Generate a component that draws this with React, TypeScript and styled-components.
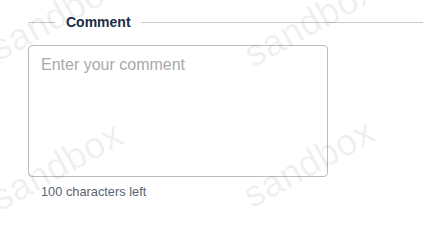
import styled, {createGlobalStyle} from 'styled-components';

const GlobalStyle = createGlobalStyle`
  html, body {
    margin: 0;
    padding: 0;
    background: #ffffff;
    font-family: "Liberation Sans", Arial, sans-serif;
  }
`;

const Page = styled.div`
  position: relative;
  width: 423px;
  height: 214px;
  overflow: hidden;
  padding: 14px 0 0 28px;
  box-sizing: border-box;
`;

const TitleRow = styled.div`
  display: flex;
  align-items: center;
  height: 16px;
`;

const Rule = styled.span<{$grow?: boolean}>`
  height: 1px;
  background: #c9c9c9;
  flex: ${(p) => (p.$grow ? '1 1 auto' : '0 0 27px')};
`;

const Title = styled.span`
  margin: 0 10px 0 11px;
  font-size: 14px;
  line-height: 16px;
  font-weight: 700;
  color: #1b2d45;
`;

const CommentBox = styled.textarea`
  display: block;
  margin-top: 15px;
  width: 300px;
  height: 132px;
  box-sizing: border-box;
  padding: 10px 12px;
  border: 1px solid #bdbdbd;
  border-radius: 4px;
  resize: none;
  outline: none;
  font-family: "Liberation Sans", Arial, sans-serif;
  font-size: 16px;
  color: #333333;
  background: #ffffff;

  &::placeholder {
    color: #a9a9a9;
  }
`;

const Counter = styled.div`
  margin: 7px 0 0 13px;
  font-size: 12.8px;
  color: #5b6570;
`;

const Watermark = styled.span<{$x: number; $y: number}>`
  position: absolute;
  left: ${(p) => p.$x}px;
  top: ${(p) => p.$y}px;
  font-family: "Liberation Sans", Arial, sans-serif;
  font-size: 37px;
  letter-spacing: 0.5px;
  color: rgba(0, 0, 0, 0.07);
  transform: rotate(-29deg);
  transform-origin: left bottom;
  pointer-events: none;
  white-space: nowrap;
  line-height: 1;
`;

const MARKS = [
  {x: 2, y: 30},
  {x: 256, y: 36},
  {x: 3, y: 180},
  {x: 255, y: 177},
];

export default function App() {
  return (
    <Page>
      <GlobalStyle />
      <TitleRow>
        <Rule />
        <Title>Comment</Title>
        <Rule $grow />
      </TitleRow>
      <CommentBox placeholder="Enter your comment" maxLength={100} />
      <Counter>100 characters left</Counter>
      {MARKS.map((m) => (
        <Watermark key={`${m.x}-${m.y}`} $x={m.x} $y={m.y}>
          sandbox
        </Watermark>
      ))}
    </Page>
  );
}
